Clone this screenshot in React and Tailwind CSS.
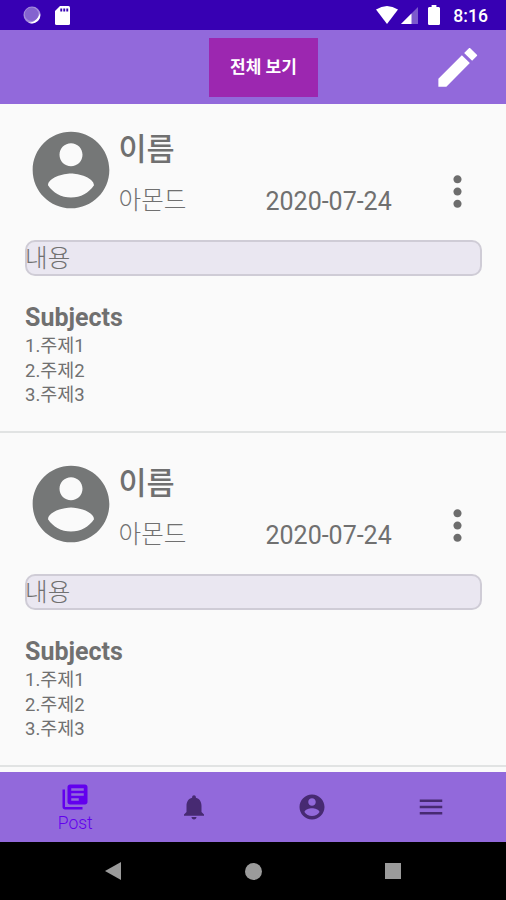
// Material icon outlines, all on a 24x24 grid
const icons = {
  account:
    "M12 2C6.48 2 2 6.48 2 12s4.48 10 10 10 10-4.48 10-10S17.52 2 12 2zm0 3c1.66 0 3 1.34 3 3s-1.34 3-3 3-3-1.34-3-3 1.34-3 3-3zm0 14.2c-2.5 0-4.71-1.28-6-3.22.03-1.99 4-3.08 6-3.08 1.99 0 5.97 1.09 6 3.08-1.29 1.94-3.5 3.22-6 3.22z",
  edit: "M3 17.25V21h3.75L17.81 9.94l-3.75-3.75L3 17.25zM15.13 5.12l2.35-2.35h.4l3.35 3.35v.4l-2.35 2.35z",
  more:
    "M12 8c1.1 0 2-.9 2-2s-.9-2-2-2-2 .9-2 2 .9 2 2 2zm0 2c-1.1 0-2 .9-2 2s.9 2 2 2 2-.9 2-2-.9-2-2-2zm0 6c-1.1 0-2 .9-2 2s.9 2 2 2 2-.9 2-2-.9-2-2-2z",
  library:
    "M4 6H2v14c0 1.1.9 2 2 2h14v-2H4V6zm16-4H8c-1.1 0-2 .9-2 2v12c0 1.1.9 2 2 2h12c1.1 0 2-.9 2-2V4c0-1.1-.9-2-2-2zm-1 9H9V9h10v2zm-4 4H9v-2h6v2zm4-8H9V5h10v2z",
  bell:
    "M12 22c1.1 0 2-.9 2-2h-4c0 1.1.89 2 2 2zm6-6v-5c0-3.07-1.64-5.64-4.5-6.32V4c0-.83-.67-1.5-1.5-1.5s-1.5.67-1.5 1.5v.68C7.63 5.36 6 7.92 6 11v5l-2 2v1h16v-1l-2-2z",
  menu: "M3 18h18v-2H3v2zm0-5h18v-2H3v2zm0-7v2h18V6H3z",
  battery:
    "M15.67 4H14V2h-4v2H8.33C7.6 4 7 4.6 7 5.33v15.33C7 21.4 7.6 22 8.33 22h7.33c.74 0 1.34-.6 1.34-1.33V5.33C17 4.6 16.4 4 15.67 4z",
};

const posts = [
  { id: 1, name: "이름", nickname: "아몬드", date: "2020-07-24", content: "내용", subjects: ["주제1", "주제2", "주제3"] },
  { id: 2, name: "이름", nickname: "아몬드", date: "2020-07-24", content: "내용", subjects: ["주제1", "주제2", "주제3"] },
];

const tabs = [
  { icon: "library", label: "Post", active: true },
  { icon: "bell" },
  { icon: "account" },
  { icon: "menu" },
];

function Icon({ name, className }) {
  return (
    <svg viewBox="0 0 24 24" fill="currentColor" className={`shrink-0 ${className}`}>
      <path d={icons[name]} />
    </svg>
  );
}

function StatusBar() {
  return (
    <div className="flex h-[30px] shrink-0 items-center bg-[#3700b3] pl-[23px] pr-[18px] text-white">
      <svg viewBox="0 0 18 18" className="h-[18px] w-[18px]">
        <circle cx="9" cy="9" r="8.5" fill="#a48bdc" />
        <path d="M17 7a8.5 8.5 0 0 1-12 9.5c5 .5 10-3 12-9.5z" fill="#fff" />
        <circle cx="8.6" cy="8.2" r="6.8" fill="#8463cf" />
      </svg>
      <svg viewBox="0 0 15 19" className="ml-[14px] h-[19px] w-[15px]">
        <path d="M5 0h8.5Q15 0 15 1.5v16q0 1.5-1.5 1.5h-12Q0 19 0 17.5V5z" fill="#fff" />
        <path d="M5.3 2.5h1.9v3H5.3zM8.3 2.5h1.9v3H8.3zM11.3 2.5h1.9v3h-1.9z" fill="#3700b3" />
      </svg>
      <div className="ml-auto flex items-center">
        <svg viewBox="0 0 22 18" className="h-[18px] w-[22px]">
          <path d="M0 3.5Q11-3.5 22 3.5L11 18z" fill="#fff" />
        </svg>
        <svg viewBox="0 0 17 17" className="ml-[3px] mt-px h-[17px] w-[17px]">
          <path d="M17 0v17H0z" fill="#fff" opacity=".35" />
          <path d="M10.5 6.5V17H0z" fill="#fff" />
        </svg>
        <svg viewBox="7 2 10 20" preserveAspectRatio="none" className="ml-[10px] h-[20px] w-[12px]">
          <path d={icons.battery} fill="#fff" />
        </svg>
        <span className="ml-[13px] mt-[3px] text-[17.6px] leading-none font-medium">8:16</span>
      </div>
    </div>
  );
}

function Header() {
  return (
    <header className="grid h-[74px] shrink-0 grid-cols-[209px_109px_1fr] items-center bg-[#9269db]">
      <button className="col-start-2 h-[59px] bg-[#9c27b0] pt-[2px] text-[17px] font-bold whitespace-nowrap text-white">
        전체 보기
      </button>
      <Icon name="edit" className="mr-[23px] h-[51px] w-[51px] justify-self-end text-white" />
    </header>
  );
}

function Post({ post }) {
  return (
    <article className="mb-[5px] h-[329px] shrink-0 border-b-2 border-[#e1e3e3] px-[25px] pt-5 text-[#707070]">
      <div className="flex h-[92px]">
        <Icon name="account" className="h-[92px] w-[92px] text-[#757777]" />
        <div className="flex flex-1 flex-col pl-[1.5px]">
          <h2 className="mt-1 text-[30.5px] leading-[44px] font-medium">{post.name}</h2>
          <div className="mt-[11px] flex h-[36px] items-center text-[24.6px]">
            <span className="w-[147px] font-light">{post.nickname}</span>
            <span className="pt-px text-[25px]">{post.date}</span>
          </div>
        </div>
        <Icon name="more" className="-mr-px mt-[43px] h-[49px] w-[49px] text-[#6d6d6d]" />
      </div>
      <div className="mt-6 flex h-[36px] w-[457px] items-center rounded-[10px] border-2 border-[#cfccd6] bg-[#eae7f1] text-[24.6px] leading-none font-light">
        <span className="-ml-[2px] pt-[2px]">{post.content}</span>
      </div>
      <h3 className="mt-[27px] text-[25px] leading-[30px] font-bold">Subjects</h3>
      <ol className="mt-px text-[18.5px] leading-[24.7px]">
        {post.subjects.map((subject, i) => (
          <li key={subject}>
            {i + 1}.{subject}
          </li>
        ))}
      </ol>
    </article>
  );
}

function TabBar() {
  return (
    <nav className="grid h-[70px] shrink-0 grid-cols-4 bg-[#9269db] px-4">
      {tabs.map(tab => (
        <button
          key={tab.icon}
          className={`flex flex-col items-center justify-center ${tab.active ? "pt-[2px] text-[#6200ee]" : "text-[#472a72]"}`}
        >
          <Icon name={tab.icon} className="h-[30px] w-[30px]" />
          {tab.label && <span className="text-[17.5px] leading-[22px] font-light">{tab.label}</span>}
        </button>
      ))}
    </nav>
  );
}

function SystemNav() {
  return (
    <div className="flex h-[58px] shrink-0 items-center justify-between bg-black px-[105px] text-[#9b9b9b]">
      <svg viewBox="0 0 16 18" className="h-[18px] w-4">
        <path d="M16 0v18L0 9z" fill="currentColor" />
      </svg>
      <div className="h-[17px] w-[17px] rounded-full bg-[#9b9b9b]" />
      <div className="h-4 w-4 bg-[#9b9b9b]" />
    </div>
  );
}

export default function App() {
  return (
    <div className="flex h-[900px] w-[506px] flex-col overflow-hidden bg-[#fafafa] font-[Roboto,'Noto_Sans_CJK_KR',sans-serif]">
      <StatusBar />
      <Header />
      <main className="flex flex-1 flex-col overflow-hidden">
        {posts.map(post => (
          <Post key={post.id} post={post} />
        ))}
      </main>
      <TabBar />
      <SystemNav />
    </div>
  );
}
